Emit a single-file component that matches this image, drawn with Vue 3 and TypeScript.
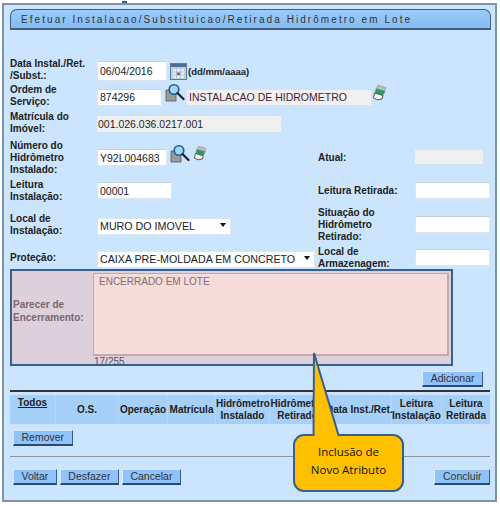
<script setup lang="ts">
const headers = [
  { lines: ['Todos'], cls: 'todos' },
  { lines: ['O.S.'], cls: '' },
  { lines: ['Operação'], cls: '' },
  { lines: ['Matrícula'], cls: '' },
  { lines: ['Hidrômetro', 'Instalado'], cls: '' },
  { lines: ['Hidrômetro', 'Retirado'], cls: '' },
  { lines: ['Data Inst./Ret.'], cls: '' },
  { lines: ['Leitura', 'Instalação'], cls: '' },
  { lines: ['Leitura', 'Retirada'], cls: '' },
]
</script>

<template>
  <div class="page">
    <span class="tick"></span>
    <main class="panel">
      <header class="title">Efetuar Instalacao/Substituicao/Retirada Hidrômetro em Lote</header>

      <form class="form" @submit.prevent>
        <div class="row r1">
          <label class="up">Data Instal./Ret.<br />/Subst.:</label>
          <div class="cell">
            <input class="field w70" value="06/04/2016" />
            <svg class="cal" viewBox="0 0 17 17" width="17" height="17">
              <rect x="0.5" y="0.5" width="16" height="16" fill="#b9cfe6" stroke="#5f7d9c" />
              <rect x="1" y="1" width="15" height="3" fill="#4c6f96" />
              <rect x="3" y="6" width="11" height="9" fill="#e6eef6" />
              <path d="M6.500 6v9M10.500 6v9M3 9h11M3 12h11" stroke="#9db6d0" stroke-width="0.7" />
              <rect x="7" y="9.500" width="3" height="2.500" fill="#b0506a" />
            </svg>
            <span class="hint">(dd/mm/aaaa)</span>
          </div>
        </div>

        <div class="row r2">
          <label class="up">Ordem de<br />Serviço:</label>
          <div class="cell">
            <input class="field w65" value="874296" />
            <svg class="lens" viewBox="0 0 20 19" width="20" height="19">
              <path d="M1 7h7l3 3v8H1z" fill="#9a9a9a" stroke="#555" stroke-width="0.8" />
              <circle cx="9" cy="6.500" r="4.800" fill="#9fd8f4" stroke="#1f5c94" stroke-width="1.600" />
              <path d="M12.500 10l6 6" stroke="#222" stroke-width="2.200" stroke-linecap="round" />
            </svg>
            <input class="readonly os" value="INSTALACAO DE HIDROMETRO" readonly />
            <svg class="eraser raise" viewBox="0 0 16 17" width="16" height="17">
              <path d="M6 1l8 2.500-2 6.500-9-3z" fill="#bbb" stroke="#999" stroke-width="0.6" />
              <path d="M4.500 4.500l8.500 2.500-2 4.500-8.500-2.500z" fill="#2f9a68" />
              <path d="M2.500 9l8.500 2.500-1 3.500q-5 2-8.500-1z" fill="#f4f4f4" stroke="#555" stroke-width="1" />
            </svg>
          </div>
        </div>

        <div class="row r3">
          <label class="up">Matrícula do<br />Imóvel:</label>
          <div class="cell">
            <input class="readonly mat" value="001.026.036.0217.001" readonly />
          </div>
        </div>

        <div class="row r4">
          <label>Número do<br />Hidrômetro<br />Instalado:</label>
          <div class="cell">
            <input class="field w70" value="Y92L004683" />
            <svg class="lens" viewBox="0 0 20 19" width="20" height="19">
              <path d="M1 7h7l3 3v8H1z" fill="#9a9a9a" stroke="#555" stroke-width="0.8" />
              <circle cx="9" cy="6.500" r="4.800" fill="#9fd8f4" stroke="#1f5c94" stroke-width="1.600" />
              <path d="M12.500 10l6 6" stroke="#222" stroke-width="2.200" stroke-linecap="round" />
            </svg>
            <svg class="eraser" viewBox="0 0 16 17" width="15" height="16">
              <path d="M6 1l8 2.500-2 6.500-9-3z" fill="#bbb" stroke="#999" stroke-width="0.6" />
              <path d="M4.500 4.500l8.500 2.500-2 4.500-8.500-2.500z" fill="#2f9a68" />
              <path d="M2.500 9l8.500 2.500-1 3.500q-5 2-8.500-1z" fill="#f4f4f4" stroke="#555" stroke-width="1" />
            </svg>
          </div>
          <label>Atual:</label>
          <input class="readonly atual" readonly />
        </div>

        <div class="row r5">
          <label>Leitura<br />Instalação:</label>
          <div class="cell"><input class="field w75" value="00001" /></div>
          <label>Leitura Retirada:</label>
          <input class="field w75" />
        </div>

        <div class="row r6">
          <label>Local de<br />Instalação:</label>
          <div class="cell">
            <div class="select w134">
              <select><option>MURO DO IMOVEL</option></select>
            </div>
          </div>
          <label>Situação do<br />Hidrômetro<br />Retirado:</label>
          <input class="field w75" />
        </div>

        <div class="row r7">
          <label>Proteção:</label>
          <div class="cell">
            <div class="select w218">
              <select><option>CAIXA PRE-MOLDADA EM CONCRETO</option></select>
            </div>
          </div>
          <label>Local de<br />Armazenagem:</label>
          <input class="field w75" />
        </div>

        <section class="parecer">
          <label>Parecer de<br />Encerramento:</label>
          <div class="area">
            <textarea readonly>ENCERRADO EM LOTE</textarea>
            <div class="count">17/255</div>
          </div>
        </section>

        <div class="add"><button type="button" class="btn">Adicionar</button></div>
        <hr class="dark" />

        <table class="grid">
          <thead>
            <tr>
              <th v-for="h in headers" :key="h.lines.join()" :class="h.cls">
                <template v-for="(l, i) in h.lines" :key="l"><br v-if="i" />{{ l }}</template>
              </th>
            </tr>
          </thead>
        </table>

        <div class="remove"><button type="button" class="btn">Remover</button></div>
        <hr class="light" />

        <div class="actions">
          <button type="button" class="btn">Voltar</button>
          <button type="button" class="btn">Desfazer</button>
          <button type="button" class="btn">Cancelar</button>
          <button type="button" class="btn end">Concluir</button>
        </div>
      </form>
    </main>

    <svg class="callout" viewBox="290 350 118 145" width="118" height="145">
      <path
        d="M304 435H313.500L314 353L338.500 435H393a10 10 0 0 1 10 10V481a10 10 0 0 1-10 10H304a10 10 0 0 1-10-10V445a10 10 0 0 1 10-10z"
        fill="#ffc000"
        stroke="#3a5f8f"
        stroke-width="2"
      />
      <text x="348.500" y="456" text-anchor="middle">Inclusão de</text>
      <text x="348.500" y="474" text-anchor="middle">Novo Atributo</text>
    </svg>
  </div>
</template>

<style>
html,
body {
  margin: 0;
  background: #fff;
}
</style>

<style scoped>
.page {
  position: relative;
  width: 500px;
  height: 506px;
  overflow: hidden;
  padding: 3px 3px 0 2px;
  box-sizing: border-box;
  font-family: "Liberation Sans", Arial, sans-serif;
}
.tick {
  position: absolute;
  left: 122px;
  top: 1px;
  width: 5px;
  height: 2px;
  background: #3a5f8f;
}
.panel {
  height: 499px;
  box-sizing: border-box;
  background: #cbe5fe;
  border: 2px solid #7f93a6;
  padding: 4px 4px 0 4px;
}
.title {
  height: 21px;
  box-sizing: border-box;
  margin: 0 0 0 2px;
  padding: 0 0 0 10px;
  line-height: 19px;
  font-size: 10px;
  letter-spacing: 2.06px;
  color: #333;
  white-space: nowrap;
  border: 1px solid #3f5f7c;
  border-bottom-width: 2px;
  border-radius: 7px 7px 0 0;
  background: linear-gradient(#9ccbf8, #84bcf4);
}
.form {
  margin-top: 28px;
  padding: 0 1px 0 2px;
}
.row {
  display: grid;
  grid-template-columns: 87px 221px 97px 1fr;
  align-items: center;
}
.r1 { height: 26px; }
.r2 { height: 26px; }
.r3 { height: 28px; }
.r4 { height: 39px; }
.r5 { height: 27px; }
.r6 { height: 41px; }
.r7 { height: 25px; }
label {
  font-size: 10px;
  font-weight: 700;
  line-height: 12px;
  color: #222;
  white-space: nowrap;
}
.up { margin-top: -2px; }
.cell {
  display: flex;
  align-items: center;
  min-width: 0;
}
.cell > * { flex: none; }
input,
select,
textarea {
  font-family: inherit;
  box-sizing: border-box;
  margin: 0;
  outline: none;
}
.field {
  height: 17px;
  padding: 0 2px;
  font-size: 10.500px;
  color: #222;
  background: #fff;
  border: 1px solid #dbe6f1;
  border-top-color: #c6d3df;
}
.r1 .field { height: 20px; }
.w65 { width: 65px; }
.w70 { width: 70px; }
.w75 { width: 75px; }
.readonly {
  height: 15px;
  padding: 0 1px;
  border: 0;
  font-size: 10.500px;
  color: #222;
  background: #f0f0f0;
}
.mat { width: 184px; height: 16px; }
.os { width: 184px; margin-left: 2px; color: #4a2030; padding-left: 2px; }
.atual { width: 68px; height: 14px; margin-top: -2px; }
.cal { margin-left: 3px; }
.hint { margin-left: 1px; font-size: 9.500px; font-weight: 700; color: #222; }
.lens { margin: -9px 0 0 3px; }
.eraser { margin: -9px 0 0 3px; }
.raise { margin: -9px 0 0 1px; }
.select {
  position: relative;
  height: 17px;
}
.select select {
  appearance: none;
  width: 100%;
  height: 100%;
  padding: 0 2px;
  font-size: 10.700px;
  color: #222;
  background: #fff;
  border: 1px solid #dbe6f1;
  border-radius: 0;
}
.select::after {
  content: "";
  position: absolute;
  right: 5px;
  top: 7px;
  border: 3.500px solid transparent;
  border-top: 4px solid #111;
  border-bottom: 0;
}
.w134 { width: 134px; }
.w218 { width: 218px; }
.parecer {
  display: flex;
  align-items: center;
  box-sizing: border-box;
  width: 443px;
  height: 97px;
  margin-top: -1px;
  padding: 2px 2px 0 1px;
  border: 2px solid #3a5f8f;
  background: #dcd0da;
  overflow: hidden;
  position: relative;
}
.parecer label {
  width: 80px;
  flex: none;
  color: #7d6670;
  line-height: 13px;
  margin-top: -16px;
}
.area {
  align-self: flex-start;
  flex: 1;
}
.area textarea {
  display: block;
  width: 356px;
  height: 83px;
  resize: none;
  padding: 1px 5px;
  font-size: 10px;
  line-height: 13px;
  color: #8a6a70;
  background: #f3dcda;
  border: 1px solid #c5aaa9;
  border-width: 1px 2px 2px 1px;
  overflow: hidden;
}
.count {
  font-size: 10px;
  line-height: 12px;
  color: #5a5560;
  margin-left: 1px;
}
.add {
  display: flex;
  justify-content: flex-end;
  margin-top: 5px;
  padding-right: 7px;
}
.btn {
  height: 16px;
  box-sizing: border-box;
  padding: 0 7.500px;
  font-family: inherit;
  font-size: 10.500px;
  line-height: 13px;
  color: #333;
  background: #8fc3fa;
  border: 1px solid;
  border-color: #d6e9fc #3a5a88 #2c4a78 #d6e9fc;
  border-width: 1px 1px 2px 1px;
  border-radius: 0;
}
hr {
  margin: 0;
  border: 0;
}
.dark {
  height: 2px;
  margin-top: 3px;
  background: #333;
}
.light {
  height: 1px;
  margin-top: 10px;
  background: #8f979e;
}
.grid {
  width: 480px;
  margin-top: 3px;
  table-layout: fixed;
  border-collapse: separate;
  border-spacing: 0;
  background: #a6d0f8;
}
.grid th {
  box-sizing: border-box;
  height: 29px;
  padding: 0;
  font-size: 10px;
  line-height: 12px;
  color: #222;
  border-right: 1px solid #b2d7fa;
  white-space: nowrap;
}
.grid th:nth-child(1) { width: 46px; }
.grid th:nth-child(2) { width: 63px; }
.grid th:nth-child(3) { width: 49px; }
.grid th:nth-child(4) { width: 48px; }
.grid th:nth-child(5) { width: 54px; }
.grid th:nth-child(6) { width: 56px; }
.grid th:nth-child(7) { width: 66px; }
.grid th:nth-child(8) { width: 50px; }
.grid th:nth-child(9) { width: 48px; border-right: 0; }
.grid th.todos {
  vertical-align: top;
  padding-top: 2px;
  text-decoration: underline;
}
.remove {
  margin-top: 6px;
  padding-left: 3px;
  display: flex;
}
.actions {
  display: flex;
  gap: 3px;
  margin-top: 12px;
  padding-left: 3px;
}
.end { margin-left: auto; }
.callout {
  position: absolute;
  left: 290px;
  top: 350px;
}
.callout text {
  font-family: "Open Sans", sans-serif;
  font-size: 11.500px;
  fill: #111;
}
</style>
